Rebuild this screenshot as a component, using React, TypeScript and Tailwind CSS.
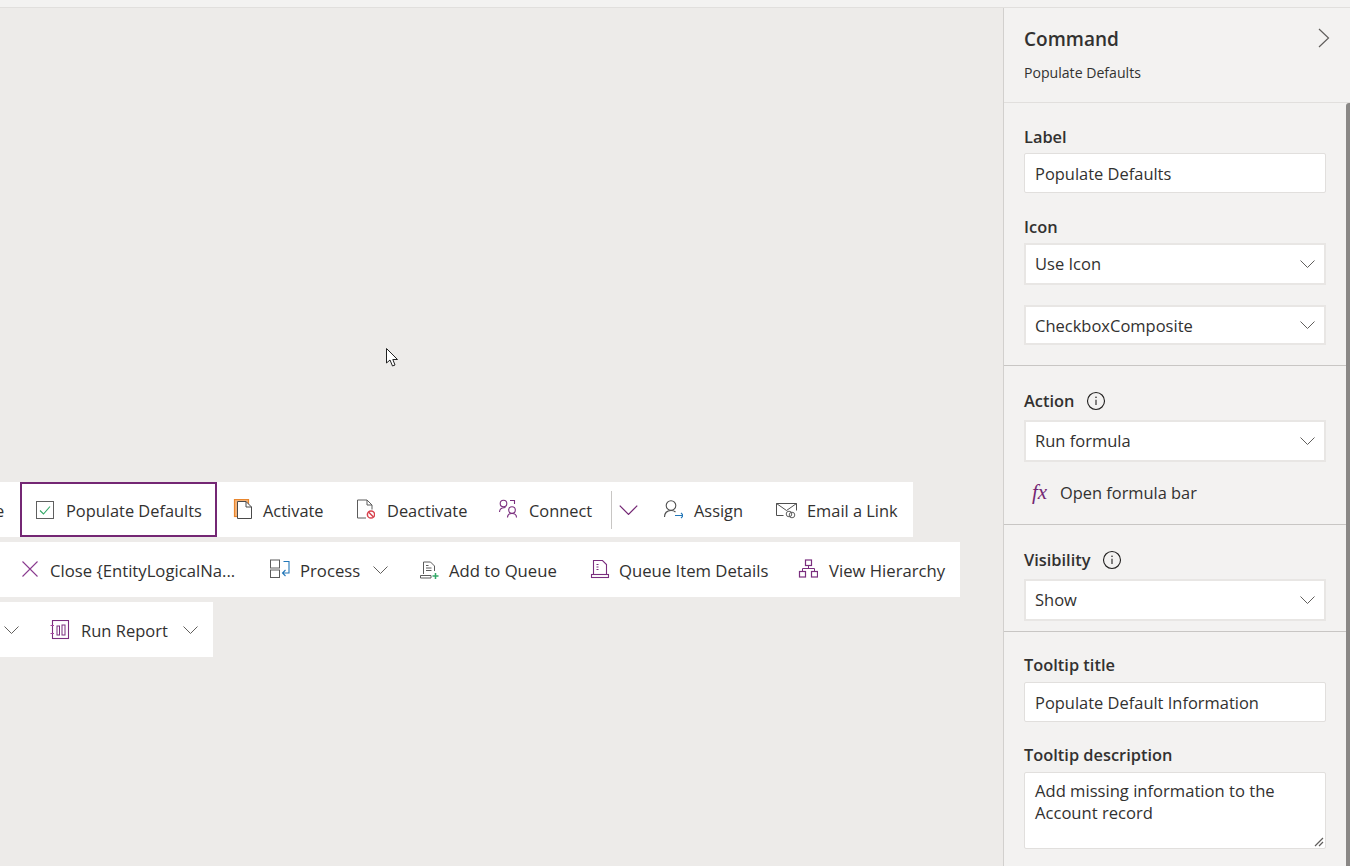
import React from "react";

const FONT = "[font-family:'Open_Sans','Noto_Sans',sans-serif]";

const Chevron = ({ color = "#605e5c", w = 15, h = 8 }: { color?: string; w?: number; h?: number }) => (
  <svg width={w} height={h} viewBox="0 0 15 8" fill="none" className="shrink-0"><path d="M0.5 0.5 L7.5 7.5 L14.5 0.5" stroke={color} strokeWidth="1" /></svg>
);

const Box = ({ children }: { children: React.ReactNode }) => (
  <svg width="20" height="20" viewBox="0 0 20 20" fill="none" className="shrink-0">{children}</svg>
);

const IconCheck = () => (
  <Box><rect x="1.5" y="1.5" width="17" height="17" stroke="#5f5f5f" /><path d="M5 10.5 L8.5 14 L15 6.5" stroke="#33a867" strokeWidth="1.1" /></Box>
);
const IconActivate = () => (
  <Box><rect x="1.5" y="0.5" width="14" height="17" fill="#f7b57a" stroke="#e8862e" strokeWidth="1.2" /><path d="M4.5 2.5 H13 L18.5 8 V19.5 H4.5 Z" fill="#fff" stroke="#4a4a4a" /><path d="M13 2.5 V8 H18.5" stroke="#4a4a4a" /></Box>
);
const IconDeactivate = () => (
  <Box><path d="M11 19 H2.5 V1 H12 L17 6 V10.5" stroke="#5c5c5c" /><path d="M12 1 V6 H17" stroke="#5c5c5c" /><circle cx="16" cy="15.5" r="3.6" stroke="#d8434e" strokeWidth="1.5" /><path d="M13.5 13 L18.5 18" stroke="#d8434e" strokeWidth="1.5" /></Box>
);
const IconConnect = () => (
  <Box><circle cx="5.5" cy="4.5" r="3.3" stroke="#7a2e7e" strokeWidth="1.1" /><path d="M1.5 13 C1.5 10 3.5 8.5 7.5 8.5" stroke="#7a2e7e" strokeWidth="1.1" /><circle cx="14" cy="11" r="3.3" stroke="#7a2e7e" strokeWidth="1.1" /><path d="M9.5 18.5 C9.5 16 11 14.5 14 14.5 C17 14.5 18.5 16 18.5 18.5" stroke="#7a2e7e" strokeWidth="1.1" /><path d="M12 1.5 H16.5 V5" stroke="#7a2e7e" strokeWidth="1.1" /></Box>
);
const IconAssign = () => (
  <Box><circle cx="8" cy="6.5" r="4.8" stroke="#4f4f4f" strokeWidth="1.1" /><path d="M1.5 18 C1.5 14 4 11.5 8 11.5 C10 11.5 11.5 12 12.5 13" stroke="#4f4f4f" strokeWidth="1.1" /><path d="M12 16.5 H20.5 M18 14 L20.5 16.5 L18 19" stroke="#2377b8" strokeWidth="1.1" /></Box>
);
const IconEmail = () => (
  <svg width="21" height="20" viewBox="0 0 21 20" fill="none" className="shrink-0"><path d="M7.5 16.5 H0.5 V4.5 H20.5 V11.5" stroke="#4f4f4f" /><path d="M0.5 4.5 L10.5 11.5 L20.5 4.5" stroke="#4f4f4f" /><circle cx="13" cy="15" r="2.8" stroke="#606060" /><circle cx="16" cy="16" r="2.8" stroke="#606060" /></svg>
);
const IconClose = () => (
  <svg width="16" height="16" viewBox="0 0 16 16" fill="none" className="shrink-0"><path d="M0.5 0.5 L15.5 15.5 M15.5 0.5 L0.5 15.5" stroke="#8a3b8f" strokeWidth="1.1" /></svg>
);
const IconProcess = () => (
  <Box><rect x="0.5" y="1" width="9" height="8" stroke="#5c5c5c" /><rect x="0.5" y="11" width="9" height="7.5" stroke="#5c5c5c" /><path d="M13.5 2.5 H19 V14 H12.5 M15.5 11 L12.5 14 L15.5 17" stroke="#2377b8" strokeWidth="1.1" /></Box>
);
const IconQueueAdd = () => (
  <Box><path d="M4.5 15 V3 H11.5 L15.5 7 V12" stroke="#5c5c5c" /><path d="M7 6.5 H9.5 M7 9 H12.5 M7 11.5 H12.5" stroke="#5c5c5c" /><path d="M1.5 16.5 H12 V19 H1.5 Z" stroke="#5c5c5c" /><path d="M16.5 14 V20 M13.5 17 H19.5" stroke="#33a867" strokeWidth="1.5" /></Box>
);
const IconQueueItem = () => (
  <Box><path d="M3.5 15.5 V1.5 H12.5 L16.5 5.5 V15.5" stroke="#7a2e7e" strokeWidth="1.1" /><path d="M6.5 5.5 H8.5 M6.5 8 H8.5 M6.5 10.5 H8.5" stroke="#7a2e7e" /><rect x="1.5" y="15.5" width="17" height="3" stroke="#7a2e7e" strokeWidth="1.1" /></Box>
);
const IconHierarchy = () => (
  <Box><rect x="7.5" y="1" width="6" height="5.5" stroke="#7a2e7e" strokeWidth="1.2" /><rect x="1.5" y="12.5" width="6" height="5.5" stroke="#7a2e7e" strokeWidth="1.2" /><rect x="13.5" y="12.5" width="6" height="5.5" stroke="#7a2e7e" strokeWidth="1.2" /><path d="M10.5 6.5 V9.5 M4.5 12.5 V9.5 H16.5 V12.5" stroke="#7a2e7e" /></Box>
);
const IconReport = () => (
  <Box><rect x="2.5" y="0.5" width="16" height="18" stroke="#7a2e7e" strokeWidth="1.1" /><path d="M0.5 5.5 H4 M0.5 13.5 H4" stroke="#a8479f" /><rect x="7" y="6" width="2.5" height="9" stroke="#7a2e7e" /><rect x="12" y="5" width="3" height="10" stroke="#7a2e7e" /></Box>
);

const Item = ({ icon, label, gap, width, className = "" }: { icon: React.ReactNode; label: string; gap: string; width: string; className?: string }) => (
  <div className={`flex items-center ${gap} ${className}`}>
    {icon}
    <span className={`whitespace-nowrap pt-[3px] ${width}`}>{label}</span>
  </div>
);

const Row = ({ children, className = "" }: { children: React.ReactNode; className?: string }) => (
  <div className={`flex h-[55px] items-center bg-white text-[#323130] ${className}`}>{children}</div>
);

const Canvas = () => (
  <main className="flex min-w-0 flex-1 flex-col gap-[5px] overflow-hidden bg-[#edebe9] pt-[474px]">
    <Row className="w-[913px] text-[16.4px]">
      <span className="ml-[-5px] w-[10px] overflow-hidden whitespace-nowrap pt-[3px]">e</span>
      <div className="ml-[15px] flex h-[55px] w-[197px] items-center gap-[11px] border-2 border-[#742774] pl-[13px]">
        <IconCheck />
        <span className="whitespace-nowrap pt-[3px]">Populate Defaults</span>
      </div>
      <Item icon={<IconActivate />} label="Activate" gap="gap-[10px]" width="w-[62px]" className="ml-[16px]" />
      <Item icon={<IconDeactivate />} label="Deactivate" gap="gap-[12px]" width="w-[80px]" className="ml-[30px]" />
      <Item icon={<IconConnect />} label="Connect" gap="gap-[11px]" width="w-[64px]" className="ml-[31px]" />
      <div className="ml-[18px] flex h-[38px] items-center border-l border-[#c8c6c4] pl-[7px]"><Chevron color="#742774" w={19} h={10} /></div>
      <Item icon={<IconAssign />} label="Assign" gap="gap-[11px]" width="w-[51px]" className="ml-[25px]" />
      <Item icon={<IconEmail />} label="Email a Link" gap="gap-[10px]" width="w-[91px]" className="ml-[31px]" />
    </Row>
    <Row className="w-[960px] text-[16.7px]">
      <Item icon={<IconClose />} label="Close {EntityLogicalNa..." gap="gap-[12px]" width="w-[186px]" className="ml-[22px]" />
      <Item icon={<IconProcess />} label="Process" gap="gap-[10px]" width="w-[58px]" className="ml-[34px]" />
      <span className="ml-[15px]"><Chevron /></span>
      <Item icon={<IconQueueAdd />} label="Add to Queue" gap="gap-[10px]" width="w-[109px]" className="ml-[31px]" />
      <Item icon={<IconQueueItem />} label="Queue Item Details" gap="gap-[9px]" width="w-[149px]" className="ml-[32px]" />
      <Item icon={<IconHierarchy />} label="View Hierarchy" gap="gap-[11px]" width="w-[116px]" className="ml-[30px]" />
    </Row>
    <Row className="w-[213px] text-[16.5px]">
      <span className="ml-[4px]"><Chevron /></span>
      <Item icon={<IconReport />} label="Run Report" gap="gap-[11px]" width="w-[87px]" className="ml-[31px]" />
      <span className="ml-[15px]"><Chevron /></span>
    </Row>
  </main>
);

const Info = () => (
  <svg width="20" height="20" viewBox="0 0 20 20" fill="none" className="shrink-0"><circle cx="10" cy="10" r="8.5" stroke="#201f1e" strokeWidth="1.1" /><path d="M10 8.8 V14" stroke="#201f1e" strokeWidth="1.1" /><circle cx="10" cy="6.3" r="0.8" fill="#201f1e" /></svg>
);

const Label = ({ children, info, infoGap = "gap-[12px]", mb = "mb-[6px]" }: { children: string; info?: boolean; infoGap?: string; mb?: string }) => (
  <div className={`${mb} flex h-[20px] items-center ${infoGap} text-[16.4px] font-semibold text-[#323130]`}>
    <span>{children}</span>
    {info && <Info />}
  </div>
);

const Input = ({ value }: { value: string }) => (
  <div className="flex h-[40px] w-[302px] items-center rounded-[2px] border border-[#e1dfdd] bg-white pl-[10px] pt-[3px] text-[16.45px] text-[#323130]">{value}</div>
);

const Select = ({ value, h = "h-[42px]", text = "pt-[1px]", className = "" }: { value: string; h?: string; text?: string; className?: string }) => (
  <div className={`flex ${h} w-[302px] items-center justify-between border-2 border-[#e8e6e4] bg-white pl-[9px] pr-[9px] text-[16.5px] text-[#323130] ${className}`}>
    <span className={text}>{value}</span>
    <Chevron />
  </div>
);

const Panel = () => (
  <aside className="relative flex w-[347px] shrink-0 flex-col overflow-hidden border-l border-l-[#d2d0ce] bg-[#f3f2f1]">
    <header className="h-[95px] border-b border-[#e1dfdd] px-[20px] pt-[18px]">
      <div className="flex h-[26px] items-center justify-between">
        <h1 className="text-[19px] font-semibold text-[#323130]">Command</h1>
        <svg width="12" height="20" viewBox="0 0 12 20" fill="none" className="mt-[-2px]"><path d="M1 1 L10.5 10 L1 19" stroke="#605e5c" strokeWidth="1.2" /></svg>
      </div>
      <div className="mt-[10px] text-[14.1px] text-[#323130]">Populate Defaults</div>
    </header>
    <section className="h-[263px] border-b border-[#c8c6c4] px-[20px] pt-[24px]">
      <Label>Label</Label>
      <Input value="Populate Defaults" />
      <div className="mt-[24px]"><Label>Icon</Label></div>
      <Select value="Use Icon" />
      <Select value="CheckboxComposite" h="h-[40px]" text="pt-[2px]" className="mt-[20px]" />
    </section>
    <section className="h-[159px] border-b border-[#c8c6c4] px-[20px] pt-[25px]">
      <Label info mb="mb-[9px]">Action</Label>
      <Select value="Run formula" />
      <div className="mt-[19px] flex h-[22px] items-center gap-[9px] pl-[8px] text-[16.4px] text-[#323130]">
        <span className="w-[19px] font-['Liberation_Serif',serif] text-[21px] italic leading-none text-[#742774]">fx</span>
        <span className="pt-[2px]">Open formula bar</span>
      </div>
    </section>
    <section className="h-[107px] border-b border-[#c8c6c4] px-[20px] pt-[25px]">
      <Label info infoGap="gap-[11px]" mb="mb-[9px]">Visibility</Label>
      <Select value="Show" />
    </section>
    <section className="px-[20px] pt-[23px]">
      <Label mb="mb-[7px]">Tooltip title</Label>
      <Input value="Populate Default Information" />
      <div className="mt-[23px]"><Label mb="mb-[7px]">Tooltip description</Label></div>
      <div className="relative h-[77px] w-[302px] rounded-[2px] border border-[#e1dfdd] bg-white px-[10px] pt-[7px] text-[16.6px] leading-[22px] text-[#323130]">
        Add missing information to the
        <br />
        Account record
        <svg width="10" height="10" viewBox="0 0 10 10" fill="none" className="absolute bottom-[1px] right-[1px]"><path d="M1 9 L9 1 M5 9 L9 5" stroke="#605e5c" strokeWidth="1.2" /></svg>
      </div>
    </section>
    <div className="absolute right-0 top-[95px] h-[771px] w-[4px] rounded-tl-[3px] bg-[#8a8886]" />
  </aside>
);

export default function App() {
  return (
    <div className={`relative flex h-[866px] w-[1350px] flex-col overflow-hidden bg-[#edebe9] ${FONT}`}>
      <div className="h-[8px] shrink-0 border-b border-[#e1dfdd] bg-[#f3f2f1]" />
      <div className="flex min-h-0 flex-1">
        <Canvas />
        <Panel />
      </div>
      <svg width="14" height="21" viewBox="0 0 14 21" className="absolute left-[385px] top-[347px]" fill="#fff" stroke="#222"><path d="M1.5 1.5 V16 L5 13 L7.5 19 L10 18 L7.8 12.5 H12.5 Z" /></svg>
    </div>
  );
}
